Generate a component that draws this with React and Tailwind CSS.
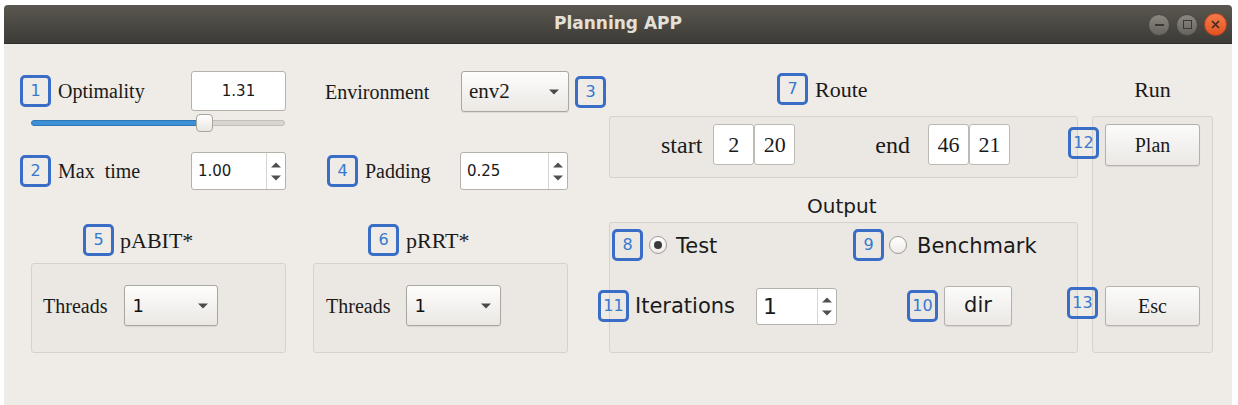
import React from "react";

const SERIF = "font-['Liberation_Serif',serif]";
const SANS = "font-['DejaVu_Sans',sans-serif]";

function Badge({ n, className = "" }) {
  return (
    <div
      className={`flex h-[32px] w-[31px] shrink-0 items-center justify-center rounded-[5px] border-[3px] border-[#3a6dc5] font-['DejaVu_Sans',sans-serif] text-[16px] leading-none text-[#3579cf] ${className}`}
    >
      {n}
    </div>
  );
}

function Arrow() {
  return (
    <svg width="10" height="6" viewBox="0 0 10 6" className="shrink-0">
      <path d="M0 0.5 L10 0.5 L5 5.5 Z" fill="#4a4a4a" />
    </svg>
  );
}

function SpinArrows() {
  return (
    <div className="flex w-[19px] flex-col items-center justify-center gap-[7px] border-l border-[#d8d4cf]">
      <svg width="10" height="6" viewBox="0 0 10 6">
        <path d="M0 5.5 L10 5.5 L5 0.5 Z" fill="#505050" />
      </svg>
      <svg width="10" height="6" viewBox="0 0 10 6">
        <path d="M0 0.5 L10 0.5 L5 5.5 Z" fill="#505050" />
      </svg>
    </div>
  );
}

function Spin({ value, w, h, text }) {
  return (
    <div className={`flex shrink-0 overflow-hidden rounded-[3px] border border-[#b5b1ab] bg-white ${w} ${h}`}>
      <div className={`flex flex-1 items-center pl-[6px] font-['DejaVu_Sans',sans-serif] text-[#1a1a1a] ${text}`}>{value}</div>
      <SpinArrows />
    </div>
  );
}

function Combo({ value, w, className = "" }) {
  return (
    <div
      className={`flex h-[41px] shrink-0 items-center justify-between rounded-[3px] border border-[#aaa6a0] bg-gradient-to-b from-[#fdfdfc] to-[#ebe8e4] pl-[7px] pr-[9px] shadow-[0_1px_1px_rgba(0,0,0,0.08)] ${w} ${className}`}
    >
      {value}
      <Arrow />
    </div>
  );
}

function Button({ children, className = "" }) {
  return (
    <div
      className={`flex shrink-0 items-center justify-center rounded-[3px] border border-[#b4b0aa] bg-gradient-to-b from-[#fbfbfa] to-[#ebe8e5] shadow-[0_1px_1px_rgba(0,0,0,0.08)] text-[#1a1a1a] ${className}`}
    >
      {children}
    </div>
  );
}

function Radio({ checked }) {
  return (
    <div className="flex h-[18px] w-[18px] shrink-0 items-center justify-center rounded-full border border-[#9e9a93] bg-gradient-to-b from-white to-[#eeece9]">
      {checked && <div className="h-[8px] w-[8px] rounded-full bg-[#3a3a3a]" />}
    </div>
  );
}

function Cell({ v }) {
  return (
    <div className={`flex h-[41px] w-[41px] items-center justify-center rounded-[3px] border border-[#bdb9b3] bg-white ${SERIF} text-[22px] text-[#1a1a1a]`}>
      {v}
    </div>
  );
}

export default function App() {
  return (
    <div className="h-[405px] w-[1238px] overflow-hidden bg-white">
      <div className="ml-[4px] mt-[5px] flex h-[400px] w-[1228px] flex-col">
        {/* Title bar */}
        <div className="relative flex h-[39px] shrink-0 items-center justify-center rounded-t-[4px] border-b border-[#2e2d29] bg-gradient-to-b from-[#5a5750] to-[#3d3b37]">
          <span className="font-['DejaVu_Sans',sans-serif] text-[17px] font-bold text-[#e4e0d7]">Planning APP</span>
          <div className="absolute right-[5px] top-[8px] flex items-center gap-[6px]">
            <div className="flex h-[22px] w-[22px] items-center justify-center rounded-full border border-[#4a4843] bg-gradient-to-b from-[#8a8680] to-[#67645e]">
              <div className="h-[2px] w-[9px] bg-[#3a3834]" />
            </div>
            <div className="flex h-[22px] w-[22px] items-center justify-center rounded-full border border-[#4a4843] bg-gradient-to-b from-[#8a8680] to-[#67645e]">
              <div className="h-[9px] w-[9px] border-[1.5px] border-[#3a3834]" />
            </div>
            <div className="flex h-[23px] w-[23px] items-center justify-center rounded-full border border-[#b8461f] bg-gradient-to-b from-[#f57a4a] to-[#e4521d]">
              <svg width="9" height="9" viewBox="0 0 9 9">
                <path d="M1 1 L8 8 M8 1 L1 8" stroke="#3a2a22" strokeWidth="1.6" />
              </svg>
            </div>
          </div>
        </div>

        {/* Body */}
        <div className="flex flex-1 items-start bg-[#efebe7]">
          {/* Column A */}
          <div className="ml-[16px] mt-[27px] flex w-[266px] flex-col">
            <div className="flex h-[40px] items-center">
              <Badge n="1" />
              <span className={`ml-[7px] ${SERIF} text-[20px] text-[#1a1a1a]`}>Optimality</span>
              <div className={`ml-auto flex h-[40px] w-[95px] items-center justify-center rounded-[3px] border border-[#b5b1ab] bg-white ${SANS} text-[15px] text-[#1a1a1a]`}>
                1.31
              </div>
            </div>
            <div className="ml-[11px] mt-[3px] flex h-[18px] w-[254px] items-center">
              <div className="h-[6px] w-[167px] rounded-l-full border border-[#2f78b8] bg-[#3d8fd6]" />
              <div className="relative z-10 -mx-[2px] h-[18px] w-[17px] rounded-[4px] border border-[#a8a49e] bg-gradient-to-b from-white to-[#e9e6e2]" />
              <div className="h-[6px] flex-1 rounded-r-full border border-[#c2bdb7] bg-[#d8d4cf]" />
            </div>
            <div className="mt-[20px] flex h-[38px] items-center">
              <Badge n="2" />
              <span className={`ml-[7px] whitespace-pre ${SERIF} text-[20px] text-[#1a1a1a]`}>Max  time</span>
              <div className="ml-auto">
                <Spin value="1.00" w="w-[95px]" h="h-[38px]" text="text-[15px]" />
              </div>
            </div>
            <div className="mt-[34px] flex h-[32px] items-center pl-[63px]">
              <Badge n="5" />
              <span className={`ml-[6px] ${SERIF} text-[22px] text-[#1a1a1a]`}>pABIT*</span>
            </div>
            <div className="ml-[11px] mt-[7px] flex h-[90px] w-[255px] items-start rounded-[3px] border border-[#d6d1cb] bg-[#ebe8e4] pl-[11px] pt-[21px]">
              <div className="flex h-[41px] items-center">
                <span className={`${SERIF} text-[20px] text-[#1a1a1a]`}>Threads</span>
                <Combo w="w-[94px]" className="ml-[17px]" value={<span className={`${SANS} text-[18px] text-[#111111]`}>1</span>} />
              </div>
            </div>
          </div>

          {/* Column B */}
          <div className="ml-[27px] mt-[27px] flex w-[293px] flex-col">
            <div className="flex h-[41px] items-center pl-[12px]">
              <span className={`${SERIF} text-[20px] text-[#1a1a1a]`}>Environment</span>
              <Combo w="w-[108px]" className="ml-auto" value={<span className={`${SERIF} text-[21px] text-[#1a1a1a]`}>env2</span>} />
              <Badge n="3" className="ml-[6px]" />
            </div>
            <div className="mt-[40px] flex h-[38px] items-center pl-[14px] pr-[38px]">
              <Badge n="4" />
              <span className={`ml-[7px] ${SERIF} text-[20px] text-[#1a1a1a]`}>Padding</span>
              <div className="ml-auto">
                <Spin value="0.25" w="w-[108px]" h="h-[38px]" text="text-[15px]" />
              </div>
            </div>
            <div className="mt-[34px] flex h-[32px] items-center pl-[55px]">
              <Badge n="6" />
              <span className={`ml-[7px] ${SERIF} text-[22px] text-[#1a1a1a]`}>pRRT*</span>
            </div>
            <div className="mt-[7px] flex h-[90px] w-[255px] items-start rounded-[3px] border border-[#d6d1cb] bg-[#ebe8e4] pl-[12px] pt-[21px]">
              <div className="flex h-[41px] items-center">
                <span className={`${SERIF} text-[20px] text-[#1a1a1a]`}>Threads</span>
                <Combo w="w-[95px]" className="ml-[16px]" value={<span className={`${SANS} text-[18px] text-[#111111]`}>1</span>} />
              </div>
            </div>
          </div>

          {/* Column C */}
          <div className="ml-[3px] mt-[29px] flex w-[469px] flex-col">
            <div className="flex h-[32px] items-center pl-[168px]">
              <Badge n="7" />
              <span className={`ml-[7px] ${SERIF} text-[22px] text-[#1a1a1a]`}>Route</span>
            </div>
            <div className="mt-[11px] flex h-[62px] items-center rounded-[3px] border border-[#d6d1cb] bg-[#ebe8e4] pb-[5px] pl-[51px]">
              <span className={`${SERIF} text-[24px] text-[#1a1a1a]`}>start</span>
              <div className="ml-[11px] flex">
                <Cell v="2" />
                <Cell v="20" />
              </div>
              <span className={`ml-[80px] ${SERIF} text-[24px] text-[#1a1a1a]`}>end</span>
              <div className="ml-[18px] flex">
                <Cell v="46" />
                <Cell v="21" />
              </div>
            </div>
            <div className={`mt-[16px] h-[24px] pl-[198px] ${SANS} text-[20px] leading-[24px] text-[#1a1a1a]`}>Output</div>
            <div className="mt-[4px] flex h-[131px] flex-col rounded-[3px] border border-[#d6d1cb] bg-[#ebe8e4]">
              <div className="mt-[6px] flex h-[32px] items-center pl-[2px]">
                <div className="flex w-[241px] items-center">
                  <Badge n="8" />
                  <div className="ml-[6px]"><Radio checked /></div>
                  <span className={`ml-[9px] mt-[3px] ${SANS} text-[21px] text-[#1a1a1a]`}>Test</span>
                </div>
                <Badge n="9" />
                <div className="ml-[5px]"><Radio /></div>
                <span className={`ml-[10px] mt-[3px] ${SANS} text-[21px] text-[#1a1a1a]`}>Benchmark</span>
              </div>
              <div className="mt-[25px] flex h-[40px] items-center">
                <div className="-ml-[12px] flex w-[309px] items-center">
                  <Badge n="11" />
                  <span className={`ml-[6px] mt-[2px] ${SANS} text-[21px] text-[#1a1a1a]`}>Iterations</span>
                  <div className="ml-auto mr-[70px]">
                    <Spin value="1" w="w-[81px]" h="h-[37px]" text="text-[22px]" />
                  </div>
                </div>
                <Badge n="10" />
                <Button className={`ml-[6px] h-[40px] w-[68px] ${SANS} text-[21px]`}>dir</Button>
              </div>
            </div>
          </div>

          {/* Column D */}
          <div className="ml-[14px] mt-[29px] flex w-[121px] flex-col">
            <div className={`flex h-[32px] items-center justify-center ${SERIF} text-[22px] text-[#1a1a1a]`}>Run</div>
            <div className="relative mt-[11px] flex h-[237px] flex-col items-center rounded-[3px] border border-[#d6d1cb] bg-[#ebe8e4]">
              <Button className={`mt-[7px] h-[42px] w-[95px] ${SERIF} text-[20px]`}>Plan</Button>
              <Button className={`mt-[120px] h-[40px] w-[95px] ${SERIF} text-[20px]`}>Esc</Button>
              <Badge n="12" className="absolute left-[-25px] top-[10px] z-10" />
              <Badge n="13" className="absolute left-[-26px] top-[170px] z-10" />
            </div>
          </div>
        </div>
      </div>
    </div>
  );
}
